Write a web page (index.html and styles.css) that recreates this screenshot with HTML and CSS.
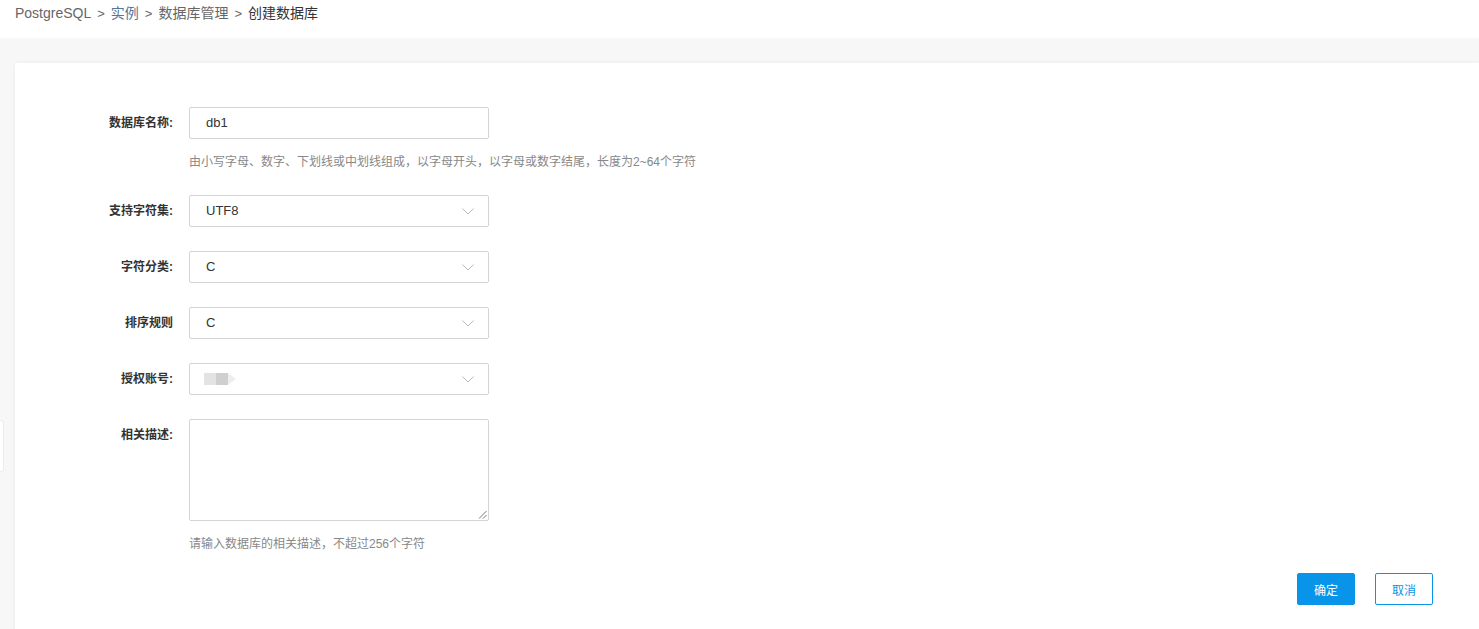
FILE: index.html
```html
<!DOCTYPE html>
<html lang="zh-CN">
<head>
<meta charset="utf-8">
<title>创建数据库</title>
<link rel="stylesheet" href="styles.css">
</head>
<body>
<header class="topbar">
  <nav class="crumbs">
    <span class="crumb">PostgreSQL</span><span class="sep">&gt;</span>
    <span class="crumb link">实例</span><span class="sep">&gt;</span>
    <span class="crumb">数据库管理</span><span class="sep">&gt;</span>
    <span class="crumb current">创建数据库</span>
  </nav>
</header>
<main class="page">
  <span class="side-tab"></span>
  <section class="card">
    <form class="form">
      <div class="row first">
        <label class="label">数据库名称:</label>
        <div class="field">
          <div class="control"><span class="value">db1</span></div>
          <p class="hint">由小写字母、数字、下划线或中划线组成，以字母开头，以字母或数字结尾，长度为2~64个字符</p>
        </div>
      </div>
      <div class="row">
        <label class="label">支持字符集:</label>
        <div class="field">
          <div class="control select"><span class="value">UTF8</span>
            <svg class="caret" width="12" height="7" viewBox="0 0 12 7"><path d="M0.5 0.5 L6 6 L11.5 0.5" fill="none" stroke="#bbb" stroke-width="1"/></svg>
          </div>
        </div>
      </div>
      <div class="row">
        <label class="label">字符分类:</label>
        <div class="field">
          <div class="control select"><span class="value">C</span>
            <svg class="caret" width="12" height="7" viewBox="0 0 12 7"><path d="M0.5 0.5 L6 6 L11.5 0.5" fill="none" stroke="#bbb" stroke-width="1"/></svg>
          </div>
        </div>
      </div>
      <div class="row">
        <label class="label">排序规则</label>
        <div class="field">
          <div class="control select"><span class="value">C</span>
            <svg class="caret" width="12" height="7" viewBox="0 0 12 7"><path d="M0.5 0.5 L6 6 L11.5 0.5" fill="none" stroke="#bbb" stroke-width="1"/></svg>
          </div>
        </div>
      </div>
      <div class="row">
        <label class="label">授权账号:</label>
        <div class="field">
          <div class="control select">
            <span class="blur"><span class="b1"></span><span class="b2"></span><span class="b3"></span></span>
            <svg class="caret" width="12" height="7" viewBox="0 0 12 7"><path d="M0.5 0.5 L6 6 L11.5 0.5" fill="none" stroke="#bbb" stroke-width="1"/></svg>
          </div>
        </div>
      </div>
      <div class="row last">
        <label class="label">相关描述:</label>
        <div class="field">
          <div class="textarea">
            <svg class="grip" width="9" height="9" viewBox="0 0 9 9"><path d="M8.5 1 L1 8.5 M8.5 5 L5 8.5" stroke="#777" stroke-width="1"/></svg>
          </div>
          <p class="hint">请输入数据库的相关描述，不超过256个字符</p>
        </div>
      </div>
    </form>
    <div class="actions">
      <button type="button" class="btn primary">确定</button>
      <button type="button" class="btn ghost">取消</button>
    </div>
  </section>
</main>
</body>
</html>
```

FILE: styles.css
```css
* { box-sizing: border-box; }
html, body { margin: 0; padding: 0; }
body {
  width: 1479px;
  height: 629px;
  overflow: hidden;
  background: #f7f7f7;
  font-family: "Microsoft YaHei", "Liberation Sans", "Noto Sans CJK SC", Arial, sans-serif;
  font-size: 12px;
  color: #333;
}
.topbar {
  height: 38px;
  background: #fff;
  padding: 4px 0 0 15px;
}
.crumbs {
  display: flex;
  align-items: center;
  font-size: 14px;
  line-height: 19px;
  color: #666;
}
.crumb.link { color: #52769c; }
.crumb.current { color: #333; }
.sep { margin: 0 6px; color: #666; font-size: 13px; }
.page {
  position: relative;
  padding: 25px 0 0 15px;
  height: 591px;
}
.side-tab {
  position: absolute;
  left: 0;
  top: 382px;
  width: 4px;
  height: 52px;
  background: #fff;
  border: 1px solid #ececec;
  border-left: 0;
  border-radius: 0 3px 3px 0;
}
.card {
  background: #fff;
  height: 580px;
  box-shadow: 0 0 4px rgba(0,0,0,0.06);
  padding: 44px 46px 0 0;
  display: flex;
  flex-direction: column;
}
.form { display: flex; flex-direction: column; }
.row {
  display: flex;
  align-items: flex-start;
  margin-bottom: 24px;
}
.row.first { margin-bottom: 25px; }
.row.last { margin-bottom: 21px; }
.label {
  width: 174px;
  flex: 0 0 174px;
  padding-right: 16px;
  text-align: right;
  font-weight: bold;
  font-size: 12px;
  line-height: 32px;
  color: #333;
}
.field { width: 300px; }
.control {
  position: relative;
  height: 32px;
  border: 1px solid #d4d4d4;
  border-radius: 2px;
  padding: 0 16px;
  display: flex;
  align-items: center;
  font-size: 13px;
  color: #333;
}
.control .value { line-height: 30px; }
.caret { position: absolute; right: 14px; top: 12px; }
.blur { display: flex; align-items: center; margin-left: -2px; }
.blur .b1 { width: 12px; height: 12px; background: #e3e3e3; }
.blur .b2 { width: 12px; height: 12px; background: #cfcfcf; }
.blur .b3 {
  width: 0; height: 0;
  border-top: 6px solid transparent;
  border-bottom: 6px solid transparent;
  border-left: 8px solid #eee;
}
.textarea {
  position: relative;
  height: 102px;
  border: 1px solid #d4d4d4;
  border-radius: 2px;
}
.grip { position: absolute; right: 1px; bottom: 1px; }
.hint {
  margin: 15px 0 0;
  font-size: 12px;
  line-height: 16px;
  color: #888;
  white-space: nowrap;
}
.actions {
  display: flex;
  justify-content: flex-end;
  gap: 20px;
}
.btn {
  width: 58px;
  height: 32px;
  border-radius: 2px;
  font-family: inherit;
  font-size: 12px;
  cursor: pointer;
}
.btn.primary { background: #0894e8; border: 1px solid #0894e8; color: #fff; }
.btn.ghost { background: #fff; border: 1px solid #0894e8; color: #0894e8; }
```
